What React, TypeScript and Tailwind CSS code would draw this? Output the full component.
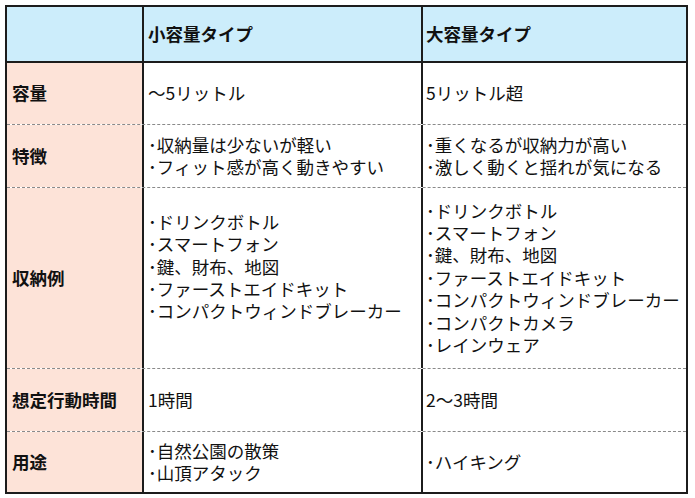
import React from "react";

type Row = {
  label: string;
  h: string;
  small: string[];
  large: string[];
  last?: boolean;
};

const rows: Row[] = [
  { label: "容量", h: "h-[62px]", small: ["～5リットル"], large: ["5リットル超"] },
  {
    label: "特徴",
    h: "h-[63px]",
    small: ["･収納量は少ないが軽い", "･フィット感が高く動きやすい"],
    large: ["･重くなるが収納力が高い", "･激しく動くと揺れが気になる"],
  },
  {
    label: "収納例",
    h: "h-[181px]",
    small: [
      "･ドリンクボトル",
      "･スマートフォン",
      "･鍵、財布、地図",
      "･ファーストエイドキット",
      "･コンパクトウィンドブレーカー",
      "\u00a0",
    ],
    large: [
      "･ドリンクボトル",
      "･スマートフォン",
      "･鍵、財布、地図",
      "･ファーストエイドキット",
      "･コンパクトウィンドブレーカー",
      "･コンパクトカメラ",
      "･レインウェア",
    ],
  },
  { label: "想定行動時間", h: "h-[63px]", small: ["1時間"], large: ["2～3時間"] },
  {
    label: "用途",
    h: "h-[60px]",
    small: ["･自然公園の散策", "･山頂アタック"],
    large: ["･ハイキング"],
    last: true,
  },
];

function Lines({ items }: { items: string[] }) {
  return (
    <div className="flex flex-col">
      {items.map((t, i) => (
        <div key={i} className="leading-[22.4px] whitespace-nowrap">
          {t}
        </div>
      ))}
    </div>
  );
}

export default function App() {
  return (
    <div
      className="w-[695px] h-[498px] bg-white pt-[5px] pl-[5px] text-[#111] text-[17.5px]"
      style={{ fontFamily: '"Noto Sans CJK JP", "Noto Sans", sans-serif' }}
    >
      <div className="w-[683px] border-2 border-[#1c1c1c] flex flex-col">
        <div className="flex h-[56px] border-b-2 border-[#1c1c1c] bg-[#ccedfb]">
          <div className="w-[135px]" />
          <div className="w-[279px] border-l-2 border-[#1c1c1c] flex items-center pl-[4px] font-bold">
            小容量タイプ
          </div>
          <div className="w-[265px] border-l-2 border-[#1c1c1c] flex items-center pl-[3px] font-bold">
            大容量タイプ
          </div>
        </div>
        {rows.map((r) => (
          <div
            key={r.label}
            className={`flex ${r.h} ${r.last ? "" : "border-b border-dashed border-[#8a8a8a]"}`}
          >
            <div className="w-[135px] bg-[#fde3d8] flex items-center pl-[5px] font-bold">
              {r.label}
            </div>
            <div className="w-[279px] border-l-2 border-solid border-[#1c1c1c] flex items-center pl-[4px]">
              <Lines items={r.small} />
            </div>
            <div className="w-[265px] border-l-2 border-solid border-[#1c1c1c] flex items-center pl-[3px]">
              <Lines items={r.large} />
            </div>
          </div>
        ))}
      </div>
    </div>
  );
}
